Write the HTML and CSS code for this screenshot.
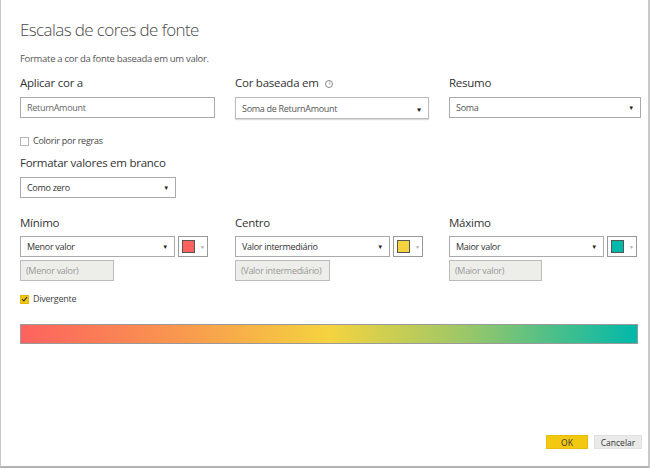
FILE: index.html
```html
<!DOCTYPE html>
<html lang="pt">
<head>
<meta charset="utf-8">
<link rel="stylesheet" href="styles.css">
</head>
<body>
<div class="dialog">
  <h1 class="title">Escalas de cores de fonte</h1>
  <p class="subtitle">Formate a cor da fonte baseada em um valor.</p>

  <div class="grid top">
    <div class="col">
      <div class="label">Aplicar cor a</div>
      <div class="field input">ReturnAmount</div>
    </div>
    <div class="col">
      <div class="label">Cor baseada em <span class="info">i</span></div>
      <div class="field select shadow"><span>Soma de ReturnAmount</span><span class="caret big">&#9660;</span></div>
    </div>
    <div class="col">
      <div class="label">Resumo</div>
      <div class="field select"><span>Soma</span><span class="caret">&#9660;</span></div>
    </div>
  </div>

  <label class="check"><span class="box"></span>Colorir por regras</label>

  <div class="label blank">Formatar valores em branco</div>
  <div class="field select narrow"><span>Como zero</span><span class="caret">&#9660;</span></div>

  <div class="grid bottom">
    <div class="col">
      <div class="label">Mínimo</div>
      <div class="pair">
        <div class="field select short"><span>Menor valor</span><span class="caret">&#9660;</span></div>
        <div class="swatch"><span class="chip red"></span><span class="mini">&#9660;</span></div>
      </div>
      <div class="field disabled w93">(Menor valor)</div>
    </div>
    <div class="col">
      <div class="label">Centro</div>
      <div class="pair">
        <div class="field select short"><span>Valor intermediário</span><span class="caret">&#9660;</span></div>
        <div class="swatch"><span class="chip yellow"></span><span class="mini">&#9660;</span></div>
      </div>
      <div class="field disabled w94">(Valor intermediário)</div>
    </div>
    <div class="col">
      <div class="label">Máximo</div>
      <div class="pair">
        <div class="field select short"><span>Maior valor</span><span class="caret">&#9660;</span></div>
        <div class="swatch"><span class="chip teal"></span><span class="mini">&#9660;</span></div>
      </div>
      <div class="field disabled w92">(Maior valor)</div>
    </div>
  </div>

  <label class="check diverge"><span class="box checked"><svg viewBox="0 0 10 10" width="8" height="8"><path d="M1.5 5.2 L4 7.6 L8.6 2.2" fill="none" stroke="#333" stroke-width="1.6"/></svg></span>Divergente</label>

  <div class="gradient"></div>

  <div class="buttons">
    <button class="btn ok">OK</button>
    <button class="btn cancel">Cancelar</button>
  </div>
</div>
</body>
</html>
```

FILE: styles.css
```css
* { box-sizing: border-box; }
html, body { margin: 0; padding: 0; background: #fff; }
body { font-family: "Open Sans", "Noto Sans", sans-serif; color: #333; }

.dialog {
  width: 650px;
  height: 468px;
  border-left: 1px solid #c9c9c9;
  border-right: 2px solid #c9c9c9;
  border-bottom: 2px solid #b3b3b3;
  padding: 17px 0 0 19px;
  position: relative;
}

.title {
  margin: 0;
  font-size: 17px;
  font-weight: 300;
  color: #4a4a4a;
  line-height: 26px;
  letter-spacing: -0.6px;
}

.subtitle {
  margin: 9px 0 0;
  font-size: 9.5px;
  color: #555;
  line-height: 14px;
  letter-spacing: -0.3px;
}

.grid {
  display: grid;
  grid-template-columns: 195px 194px 192px;
  column-gap: 20px;
}
.top { margin-top: 8px; }

.label {
  font-size: 11.5px;
  line-height: 17px;
  color: #333;
  letter-spacing: -0.25px;
  white-space: nowrap;
}
.info {
  display: inline-flex;
  align-items: center;
  justify-content: center;
  width: 8px;
  height: 8px;
  border: 1px solid #888;
  border-radius: 50%;
  font-size: 6px;
  color: #777;
  margin-left: 4px;
  vertical-align: 2px;
}

.field {
  height: 21px;
  border: 1px solid #aaa;
  font-size: 9px;
  color: #555;
  padding: 0 6px;
  display: flex;
  align-items: center;
  letter-spacing: -0.3px;
  background: #fff;
  white-space: nowrap;
}
.top .field { margin-top: 6px; }
.input { color: #666; }
.select { justify-content: space-between; color: #333; padding-right: 6px; }
.top .select { color: #555; }
.shadow { box-shadow: 0 1px 1px rgba(0,0,0,0.15); border-color: #bbb; height: 22px; }
.caret { font-size: 6px; color: #222; }
.caret.big { font-size: 6px; transform: translateY(2px) scaleX(1.2); }

.check {
  display: flex;
  align-items: center;
  font-size: 9px;
  color: #444;
  letter-spacing: -0.25px;
  margin-top: 15px;
  line-height: 14px;
}
.box {
  width: 9px;
  height: 9px;
  border: 1px solid #b5b5b5;
  margin-right: 4px;
  display: inline-flex;
  align-items: center;
  justify-content: center;
}
.box.checked { background: #f2c811; border-color: #e0b800; }

.blank { margin-top: 6px; }
.narrow { width: 156px; margin-top: 6px; }

.bottom { margin-top: 16px; }
.bottom .label { margin-bottom: 5px; }
.pair { display: flex; gap: 3px; }
.short { width: 155px; }
.swatch {
  width: 30px;
  height: 21px;
  border: 1px solid #999;
  display: flex;
  align-items: center;
  padding-left: 3px;
  gap: 5px;
}
.chip {
  width: 13px;
  height: 13px;
  border: 1px solid #555;
}
.red { background: #fd625e; }
.yellow { background: #f5d33f; }
.teal { background: #01b8aa; }
.mini { font-size: 5px; color: #aaa; }

.disabled {
  margin-top: 3px;
  background: #ededea;
  border-color: #bbb;
  color: #999;
  padding-left: 5px;
}
.w93 { width: 94px; }
.w94 { width: 95px; }
.w92 { width: 93px; }

.diverge { margin-top: 11px; }

.gradient {
  margin-top: 18px;
  width: 618px;
  height: 20px;
  border: 1px solid #9a9a9a;
  background: linear-gradient(to right, #fd625e 0%, #f9964f 25%, #f5d33f 50%, #9cc768 72%, #01b8aa 100%);
}

.buttons {
  position: absolute;
  right: 6px;
  bottom: 17px;
  display: flex;
  gap: 6px;
}
.btn {
  font-family: inherit;
  font-size: 8.5px;
  height: 14px;
  border: none;
  padding: 0;
  color: #333;
}
.ok { width: 42px; background: #f2c811; border: 1px solid #e6bd0c; }
.cancel { width: 48px; background: #eaeaea; border: 1px solid #e0e0e0; }
```
